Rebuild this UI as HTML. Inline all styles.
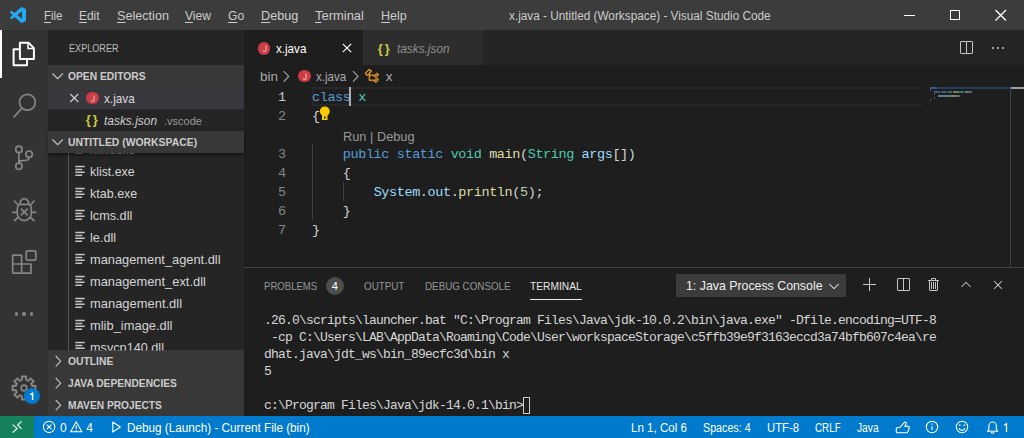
<!DOCTYPE html>
<html>
<head>
<meta charset="utf-8">
<title>x.java - Untitled (Workspace) - Visual Studio Code</title>
<style>
*{box-sizing:border-box;margin:0;padding:0}
html,body{width:1024px;height:438px;overflow:hidden;background:#1e1e1e}
body{font-family:"Liberation Sans",sans-serif;font-size:13px;color:#cccccc;position:relative}
.abs{position:absolute}
.t{position:absolute;white-space:pre;line-height:1;transform-origin:0 0}
.t u{text-decoration:underline;text-underline-offset:1.5px;text-decoration-thickness:1px}
.code{font-family:"Liberation Mono",monospace;font-size:13.5px;letter-spacing:-0.4px;color:#d4d4d4;line-height:19px}
.ln{position:absolute;left:235.6px;width:50px;text-align:right;font-family:"Liberation Mono",monospace;font-size:13.5px;letter-spacing:-0.4px;line-height:19px;white-space:pre}
.term{font-family:"Liberation Mono",monospace;font-size:13px;letter-spacing:-0.8px;color:#d6d6d6;left:264px;line-height:17px}
.k{color:#569cd6}.ty{color:#4ec9b0}.fn{color:#dcdcaa}.v{color:#9cdcfe}.n{color:#b5cea8}
.hdr{position:absolute;left:48px;width:196px;height:22px;background:#383838}
.jv{position:absolute;width:12.6px;height:12.6px;border-radius:50%;background:#cc3e44}
</style>
</head>
<body>
<!-- backgrounds -->
<div class="abs" style="left:0;top:0;width:1024px;height:30px;background:#3c3c3c"></div>
<div class="abs" style="left:0;top:30px;width:48px;height:386px;background:#333333"></div>
<div class="abs" style="left:48px;top:30px;width:196px;height:386px;background:#252526"></div>
<div class="abs" style="left:244px;top:30px;width:780px;height:35px;background:#252526"></div>
<div class="abs" style="left:244px;top:30px;width:119px;height:35px;background:#1e1e1e"></div>
<div class="abs" style="left:363px;top:30px;width:120px;height:35px;background:#2d2d2d"></div>
<div class="abs" style="left:0;top:416px;width:1024px;height:22px;background:#007acc"></div>
<div class="abs" style="left:0;top:416px;width:34px;height:22px;background:#16825d"></div>

<!-- title bar -->
<svg class="abs" style="left:10px;top:7px" width="16" height="16" viewBox="0 0 100 100"><path d="M96.5 10.8 75.9 0.9a6.2 6.2 0 0 0-7.1 1.2L29.4 38 12.2 25a4.2 4.2 0 0 0-5.3.2L1.4 30.3a4.2 4.2 0 0 0 0 6.1L16.3 50 1.4 63.6a4.2 4.2 0 0 0 0 6.1l5.5 5a4.2 4.2 0 0 0 5.3.2l17.2-13 39.4 36a6.2 6.2 0 0 0 7.1 1.2l20.6-9.9A6.2 6.2 0 0 0 100 83.6V16.4a6.2 6.2 0 0 0-3.5-5.6ZM75 72.7 45.1 50 75 27.3Z" fill="#23a9f2"/></svg>
<svg class="abs" style="left:886px;top:0" width="138" height="30" viewBox="0 0 138 30" fill="none" stroke="#ffffff" stroke-width="1">
  <path d="M18 15.5h11"/>
  <rect x="64.5" y="10.5" width="9" height="9"/>
  <path d="M109.5 10l10.5 10.5M120 10l-10.5 10.5" stroke-width="1.3"/>
</svg>

<!-- activity bar -->
<div class="abs" style="left:0;top:30px;width:2px;height:48px;background:#ffffff"></div>
<svg class="abs" style="left:0;top:30px" width="48" height="386" viewBox="0 30 48 386" fill="none" stroke="#858585" stroke-width="1.7">
  <!-- files -->
  <g stroke="#ffffff" stroke-width="2" stroke-linejoin="round">
    <path d="M19.9 42.7h8.6l5.4 5.4v11h-14z"/>
    <path d="M28 43v5.5h5.5" stroke-width="1.5"/>
    <path d="M19.5 49.3h-5.9v16h13.4v-5.8"/>
  </g>
  <!-- search -->
  <circle cx="27.4" cy="102.3" r="7.9"/>
  <path d="M21.9 108.3l-8.4 9"/>
  <!-- scm -->
  <circle cx="18.9" cy="149.4" r="3.2"/><circle cx="18.9" cy="166.3" r="3.2"/><circle cx="29.1" cy="154.2" r="3.2"/>
  <path d="M18.9 152.6v10.5M29.1 157.4c0 3.5-4 3.3-7 3.3c-2 0-3.2 1-3.2 2.4"/>
  <!-- debug -->
  <path d="M19.7 204.3a4.6 5.6 0 0 1 9.2 0"/>
  <path d="M17.3 209.2q0-4.6 3.4-4.8h7.2q3.4.2 3.4 4.8v4a7 7.4 0 0 1-14 0z"/>
  <path d="M12 212.3h5.6M31.4 212.3h5M14 200.5l4 4.5M34.5 200.5l-4 4.5M14 221l4.5-4M34.5 221l-4.5-4M20.9 208.6l6.8 6.8M27.7 208.6l-6.8 6.8"/>
  <!-- extensions -->
  <path d="M12.7 255.1h8.9v8.9h9.4v9.2h-18.3zM21.6 264v9.2M12.7 264h8.9" stroke-linejoin="round"/>
  <rect x="26.2" y="250.8" width="9.6" height="9.3" rx="1.2"/>
  <!-- gear -->
  <path d="M22.02 379.73L21.79 376.51L26.21 376.51L25.98 379.73L28.45 380.76L30.56 378.31L33.69 381.44L31.24 383.55L32.27 386.02L35.49 385.79L35.49 390.21L32.27 389.98L31.24 392.45L33.69 394.56L30.56 397.69L28.45 395.24L25.98 396.27L26.21 399.49L21.79 399.49L22.02 396.27L19.55 395.24L17.44 397.69L14.31 394.56L16.76 392.45L15.73 389.98L12.51 390.21L12.51 385.79L15.73 386.02L16.76 383.55L14.31 381.44L17.44 378.31L19.55 380.76Z" stroke-linejoin="round" stroke-width="1.9"/>
  <circle cx="24" cy="388" r="2.8"/>
</svg>
<div class="abs" style="left:14.8px;top:312.2px;width:3.6px;height:3.6px;border-radius:50%;background:#858585"></div>
<div class="abs" style="left:22.2px;top:312.2px;width:3.6px;height:3.6px;border-radius:50%;background:#858585"></div>
<div class="abs" style="left:29.6px;top:312.2px;width:3.6px;height:3.6px;border-radius:50%;background:#858585"></div>
<div class="abs" style="left:24px;top:388px;width:16px;height:16px;border-radius:50%;background:#007acc"></div>
<svg class="abs" style="left:24px;top:388px" width="16" height="16" viewBox="0 0 16 16" fill="none" stroke="#ffffff" stroke-width="1.5"><path d="M6.3 6.7l2.3-1.3v6.6"/></svg>

<!-- sidebar -->
<div class="hdr" style="top:65px"></div>
<div class="abs" style="left:48px;top:87px;width:196px;height:22px;background:#37373d"></div>
<div class="abs" style="left:68px;top:153px;width:1px;height:197px;background:#555555"></div>
<div class="abs" style="left:75.3px;top:153px;width:6.8px;height:1px;background:#777"></div>
<svg class="abs" style="left:75px;top:165px" width="11" height="12" viewBox="0 0 11 12"><path d="M0.3 1.6h9.4M0.3 4.45h7M0.3 7.3h9.4M0.3 10.15h6.8" stroke="#c5c5c5" stroke-width="1.5" fill="none"/></svg>
<svg class="abs" style="left:75px;top:187px" width="11" height="12" viewBox="0 0 11 12"><path d="M0.3 1.6h9.4M0.3 4.45h7M0.3 7.3h9.4M0.3 10.15h6.8" stroke="#c5c5c5" stroke-width="1.5" fill="none"/></svg>
<svg class="abs" style="left:75px;top:209px" width="11" height="12" viewBox="0 0 11 12"><path d="M0.3 1.6h9.4M0.3 4.45h7M0.3 7.3h9.4M0.3 10.15h6.8" stroke="#c5c5c5" stroke-width="1.5" fill="none"/></svg>
<svg class="abs" style="left:75px;top:231px" width="11" height="12" viewBox="0 0 11 12"><path d="M0.3 1.6h9.4M0.3 4.45h7M0.3 7.3h9.4M0.3 10.15h6.8" stroke="#c5c5c5" stroke-width="1.5" fill="none"/></svg>
<svg class="abs" style="left:75px;top:253px" width="11" height="12" viewBox="0 0 11 12"><path d="M0.3 1.6h9.4M0.3 4.45h7M0.3 7.3h9.4M0.3 10.15h6.8" stroke="#c5c5c5" stroke-width="1.5" fill="none"/></svg>
<svg class="abs" style="left:75px;top:275px" width="11" height="12" viewBox="0 0 11 12"><path d="M0.3 1.6h9.4M0.3 4.45h7M0.3 7.3h9.4M0.3 10.15h6.8" stroke="#c5c5c5" stroke-width="1.5" fill="none"/></svg>
<svg class="abs" style="left:75px;top:297px" width="11" height="12" viewBox="0 0 11 12"><path d="M0.3 1.6h9.4M0.3 4.45h7M0.3 7.3h9.4M0.3 10.15h6.8" stroke="#c5c5c5" stroke-width="1.5" fill="none"/></svg>
<svg class="abs" style="left:75px;top:319px" width="11" height="12" viewBox="0 0 11 12"><path d="M0.3 1.6h9.4M0.3 4.45h7M0.3 7.3h9.4M0.3 10.15h6.8" stroke="#c5c5c5" stroke-width="1.5" fill="none"/></svg>
<svg class="abs" style="left:75px;top:341px" width="11" height="12" viewBox="0 0 11 12"><path d="M0.3 1.6h9.4M0.3 4.45h7M0.3 7.3h9.4M0.3 10.15h6.8" stroke="#c5c5c5" stroke-width="1.5" fill="none"/></svg>
<div class="hdr" style="top:131px;box-shadow:0 2px 3px rgba(0,0,0,.45)"></div>
<div class="hdr" style="top:350px"></div>
<div class="hdr" style="top:372px"></div>
<div class="hdr" style="top:394px"></div>
<svg class="abs" style="left:48px;top:65px" width="196" height="351" viewBox="48 65 196 351" fill="none" stroke="#c5c5c5" stroke-width="1.1">
  <path d="M52.5 73.5l5.2 5.2 5.2-5.2"/>
  <path d="M52.5 139.5l5.2 5.2 5.2-5.2"/>
  <path d="M55.7 356l5 5.2-5 5.2"/>
  <path d="M55.7 378l5 5.2-5 5.2"/>
  <path d="M55.7 400l5 5.2-5 5.2"/>
  <path d="M70.3 94l8 8M78.3 94l-8 8" stroke="#cccccc" stroke-width="1.2"/>
</svg>
<div class="jv" style="left:86px;top:91.7px"></div>
<svg class="abs" style="left:86px;top:91.7px" width="13" height="13" viewBox="0 0 13 13" fill="none" stroke="#eaaeb1" stroke-width="1.15"><path d="M8.1 3.6v4.3a1.3 1.3 0 0 1-2.7 0.4"/></svg>
<div class="t" style="left:85.8px;top:113px;font-size:13px;font-weight:bold;color:#cbcb41;letter-spacing:1.8px">{}</div>

<!-- tabs -->
<div class="jv" style="left:257.7px;top:42.2px"></div>
<svg class="abs" style="left:257.7px;top:42.2px" width="13" height="13" viewBox="0 0 13 13" fill="none" stroke="#eaaeb1" stroke-width="1.15"><path d="M8.1 3.6v4.3a1.3 1.3 0 0 1-2.7 0.4"/></svg>
<svg class="abs" style="left:340px;top:41px" width="14" height="14" viewBox="0 0 14 14" fill="none" stroke="#ffffff" stroke-width="1.2"><path d="M2.8 2.8l8.4 8.4M11.2 2.8l-8.4 8.4"/></svg>
<div class="t" style="left:377.8px;top:41.5px;font-size:13px;font-weight:bold;color:#cbcb41;letter-spacing:1.8px">{}</div>
<svg class="abs" style="left:958px;top:39.7px" width="16" height="16" viewBox="0 0 16 16"><path fill="#c5c5c5" d="M14 1H3L2 2v11l1 1h11l1-1V2l-1-1zM8 13H3V2h5v11zm6 0H9V2h5v11z"/></svg>
<svg class="abs" style="left:990px;top:40px" width="16" height="16" viewBox="0 0 16 16"><path fill="#c5c5c5" d="M4 8a1 1 0 1 1-2 0 1 1 0 0 1 2 0zm5 0a1 1 0 1 1-2 0 1 1 0 0 1 2 0zm5 0a1 1 0 1 1-2 0 1 1 0 0 1 2 0z"/></svg>

<!-- breadcrumbs -->
<svg class="abs" style="left:244px;top:65px" width="200" height="22" viewBox="244 65 200 22" fill="none" stroke="#a9a9a9" stroke-width="1.1">
  <path d="M283.7 71.2l5 5.2-5 5.2"/>
  <path d="M353 71.2l5 5.2-5 5.2"/>
</svg>
<div class="jv" style="left:298.3px;top:69.7px"></div>
<svg class="abs" style="left:298.3px;top:69.7px" width="13" height="13" viewBox="0 0 13 13" fill="none" stroke="#eaaeb1" stroke-width="1.15"><path d="M8.1 3.6v4.3a1.3 1.3 0 0 1-2.7 0.4"/></svg>
<svg class="abs" style="left:363.5px;top:68px" width="16" height="16" viewBox="0 0 16 16"><path fill="#ee9d28" stroke="#ee9d28" stroke-width=".35" d="M11.340 9.710h.71l2.670-2.670v-.71L13.380 5h-.7l-1.820 1.810h-5V5.560l1.860-1.850V3l-2-2H5L1 5v.71l2 2h.71l1.140-1.150v5.790l.5.500H10v.52l1.330 1.340h.71l2.670-2.670v-.71L13.370 10h-.7l-1.860 1.850h-5v-4H10v.48l1.340 1.380zm1.690-3.650l.63.630-2 2-.63-.63 2-2zm0 5l.63.630-2 2-.63-.63 2-2zM3.350 6.650l-1.290-1.290 3.290-3.290 1.300 1.290-3.300 3.290z"/></svg>

<!-- editor -->
<div class="abs" style="left:312px;top:87px;width:610px;height:19px;border:2px solid #282828;border-right:none"></div>
<div class="abs" style="left:312px;top:144px;width:1px;height:76px;background:#404040"></div>
<div class="abs" style="left:343px;top:182px;width:1px;height:19px;background:#404040"></div>
<div class="t code" style="left:312px;top:88px"><span class="k">class</span> <span class="ty">x</span></div>
<div class="t code" style="left:312px;top:107px">{</div>
<div class="t code" style="left:312px;top:145px">    <span class="k">public</span> <span class="k">static</span> <span class="ty">void</span> <span class="fn">main</span>(<span class="ty">String</span> <span class="v">args</span>[])</div>
<div class="t code" style="left:312px;top:164px">    {</div>
<div class="t code" style="left:312px;top:183px">        <span class="v">System</span>.<span class="v">out</span>.<span class="fn">println</span>(<span class="n">5</span>);</div>
<div class="t code" style="left:312px;top:202px">    }</div>
<div class="t code" style="left:312px;top:221px">}</div>
<div class="ln" style="top:88px;color:#c6c6c6">1</div>
<div class="ln" style="top:107px;color:#858585">2</div>
<div class="ln" style="top:145px;color:#858585">3</div>
<div class="ln" style="top:164px;color:#858585">4</div>
<div class="ln" style="top:183px;color:#858585">5</div>
<div class="ln" style="top:202px;color:#858585">6</div>
<div class="ln" style="top:221px;color:#858585">7</div>
<div class="abs" style="left:349px;top:87px;width:2px;height:19px;background:#aeafad"></div>
<!-- lightbulb -->
<svg class="abs" style="left:319px;top:106px" width="12" height="15" viewBox="0 0 12 15"><circle cx="5.8" cy="5.3" r="4.9" fill="#ffcc00"/><rect x="3" y="8.5" width="5.5" height="5.5" fill="#ffcc00"/><rect x="5" y="10.5" width="1.5" height="2.2" fill="#1e1e1e"/></svg>
<!-- minimap -->
<div class="abs" style="left:930px;top:87px;width:80px;height:2px;background:#233e5d"></div>
<div class="abs" style="left:930px;top:87px;width:7px;height:2px;background:#2e5f93"></div>
<div class="abs" style="left:1010px;top:87px;width:1px;height:180px;background:#424242"></div>
<div class="abs" style="left:1011px;top:87px;width:13px;height:2px;background:#a0a0a0"></div>
<div class="abs" style="left:930px;top:89px;width:1px;height:2px;background:#5a5a5a"></div>
<div class="abs" style="left:934px;top:91px;width:38px;height:2px;opacity:.5;background:linear-gradient(90deg,#569cd6 0 15%,#1e1e1e 15% 18%,#569cd6 18% 33%,#1e1e1e 33% 36%,#4ec9b0 36% 47%,#1e1e1e 47% 50%,#dcdcaa 50% 62%,#4ec9b0 62% 79%,#1e1e1e 79% 81%,#9cdcfe 81% 90%,#aaaaaa 90% 100%)"></div>
<div class="abs" style="left:934px;top:93px;width:1px;height:2px;background:#5a5a5a"></div>
<div class="abs" style="left:938px;top:95px;width:22px;height:2px;opacity:.5;background:linear-gradient(90deg,#9cdcfe 0 50%,#dcdcaa 50% 85%,#aaaaaa 85% 100%)"></div>
<div class="abs" style="left:934px;top:97px;width:1px;height:2px;background:#5a5a5a"></div>
<div class="abs" style="left:930px;top:99px;width:1px;height:2px;background:#5a5a5a"></div>

<!-- panel -->
<div class="abs" style="left:244px;top:267px;width:780px;height:1px;background:#414141"></div>
<div class="abs" style="left:325.6px;top:277px;width:18px;height:18px;border-radius:9px;background:#4d4d4d"></div>
<div class="abs" style="left:530px;top:298.5px;width:52px;height:1px;background:#e7e7e7"></div>
<div class="abs" style="left:676px;top:274px;width:170px;height:23px;background:#3c3c3c"></div>
<svg class="abs" style="left:826px;top:277.5px" width="16" height="16" viewBox="0 0 16 16"><path fill="#f0f0f0" d="M7.976 10.072l4.357-4.357.62.618L8.284 11h-.618L3 6.333l.619-.618 4.357 4.357z"/></svg>
<svg class="abs" style="left:861.7px;top:277px" width="16" height="16" viewBox="0 0 16 16"><path fill="#c5c5c5" d="M14 7v1H8v6H7V8H1V7h6V1h1v6h6z"/></svg>
<svg class="abs" style="left:894.5px;top:277px" width="16" height="16" viewBox="0 0 16 16"><path fill="#c5c5c5" d="M14 1H3L2 2v11l1 1h11l1-1V2l-1-1zM8 13H3V2h5v11zm6 0H9V2h5v11z"/></svg>
<svg class="abs" style="left:926px;top:277px" width="16" height="16" viewBox="0 0 16 16"><path fill="#c5c5c5" fill-rule="evenodd" d="M10 3h3v1h-1v9l-1 1H4l-1-1V4H2V3h3V2a1 1 0 0 1 1-1h3a1 1 0 0 1 1 1v1zM9 2H6v1h3V2zM4 13h7V4H4v9zm2-8H5v7h1V5zm1 0h1v7H7V5zm2 0h1v7H9V5z"/></svg>
<svg class="abs" style="left:957.7px;top:277px" width="16" height="16" viewBox="0 0 16 16"><path fill="#c5c5c5" d="M8.024 5.928l-4.357 4.357-.62-.618L7.716 5h.618L13 9.667l-.619.618-4.357-4.357z"/></svg>
<svg class="abs" style="left:990px;top:277px" width="16" height="16" viewBox="0 0 16 16"><path fill="#c5c5c5" d="M8 8.707l3.646 3.647.708-.707L8.707 8l3.647-3.646-.707-.708L8 7.293 4.354 3.646l-.707.708L7.293 8l-3.646 3.646.707.708L8 8.707z"/></svg>
<div class="t term" style="top:312px">.26.0\scripts\launcher.bat &quot;C:\Program Files\Java\jdk-10.0.2\bin\java.exe&quot; -Dfile.encoding=UTF-8</div>
<div class="t term" style="top:329px"> -cp C:\Users\LAB\AppData\Roaming\Code\User\workspaceStorage\c5ffb39e9f3163eccd3a74bfb607c4ea\re</div>
<div class="t term" style="top:346px">dhat.java\jdt_ws\bin_89ecfc3d\bin x</div>
<div class="t term" style="top:363px">5</div>
<div class="t term" style="top:397px">c:\Program Files\Java\jdk-14.0.1\bin&gt;</div>
<div class="abs" style="left:523px;top:397px;width:7px;height:17px;border:1px solid #cccccc"></div>

<!-- status bar -->
<svg class="abs" style="left:0;top:416px" width="1024" height="22" viewBox="0 416 1024 22" fill="none" stroke="#ffffff" stroke-width="1.1">
  <path d="M12.6 424.6l4.5 3.8-4.5 4.2M21.5 421.5l-3.8 3.6 3.8 3.8"/>
  <circle cx="49.1" cy="426.9" r="5.7"/><path d="M46.8 424.6l4.6 4.6M51.4 424.6l-4.6 4.6"/>
  <path d="M76.2 421.8l5.6 10h-11.2zM76.2 425.5v3.5M76.2 430v1.2" stroke-linejoin="round"/>
  <path d="M112.8 422l7.5 5-7.5 5z" stroke-linejoin="round"/>
  <!-- thumbsup -->
  <path d="M896.3 428l3.8-.8 4.6-5c1.3-.3 1.9.6 1.5 1.6l-1.3 2.6h3.2c1 0 1.4.8 1.1 1.6l-1.3 3.7c-.3.7-.8 1-1.5 1h-8.7c-.8 0-1.4-.5-1.4-1.3z" stroke-linejoin="round"/>
  <!-- info -->
  <circle cx="932" cy="427" r="5.7"/><path d="M932 426v4M932 423.5v1.2"/>
  <!-- smiley -->
  <circle cx="962" cy="427" r="5.7"/><path d="M959 428.3a3.2 3.2 0 0 0 6 0"/><path d="M959.8 424.5v1.6M964.2 424.5v1.6" stroke-width="1.3"/>
  <!-- bell -->
  <path d="M987.4 431.3h10.4l-1.5-2v-3.6a3.7 3.7 0 0 0-7.4 0v3.6zM991.3 432a1.3 1.3 0 0 0 2.6 0" stroke-linejoin="round"/>
  <path d="M1004.2 425.3l2.3-1.6v8.3" stroke-width="1.3"/>
</svg>

<div class="t" style="left:43.60px;top:9.00px;color:#cccccc;font-family:'Liberation Sans',sans-serif;font-size:13.5px;letter-spacing:0.000px;transform:scaleX(0.8500);"><u>F</u>ile</div>
<div class="t" style="left:78.80px;top:9.00px;color:#cccccc;font-family:'Liberation Sans',sans-serif;font-size:13.5px;letter-spacing:0.000px;transform:scaleX(0.8792);"><u>E</u>dit</div>
<div class="t" style="left:116.60px;top:9.00px;color:#cccccc;font-family:'Liberation Sans',sans-serif;font-size:13.5px;letter-spacing:0.000px;transform:scaleX(0.9345);"><u>S</u>election</div>
<div class="t" style="left:184.70px;top:9.00px;color:#cccccc;font-family:'Liberation Sans',sans-serif;font-size:13.5px;letter-spacing:0.000px;transform:scaleX(0.8967);"><u>V</u>iew</div>
<div class="t" style="left:228.30px;top:9.00px;color:#cccccc;font-family:'Liberation Sans',sans-serif;font-size:13.5px;letter-spacing:0.000px;transform:scaleX(0.8944);"><u>G</u>o</div>
<div class="t" style="left:260.90px;top:9.00px;color:#cccccc;font-family:'Liberation Sans',sans-serif;font-size:13.5px;letter-spacing:0.000px;transform:scaleX(0.9400);"><u>D</u>ebug</div>
<div class="t" style="left:315.30px;top:9.00px;color:#cccccc;font-family:'Liberation Sans',sans-serif;font-size:13.5px;letter-spacing:0.000px;transform:scaleX(0.9588);"><u>T</u>erminal</div>
<div class="t" style="left:380.80px;top:9.00px;color:#cccccc;font-family:'Liberation Sans',sans-serif;font-size:13.5px;letter-spacing:0.000px;transform:scaleX(0.9214);"><u>H</u>elp</div>
<div class="t" style="left:509.00px;top:10.00px;color:#cccccc;font-family:'Liberation Sans',sans-serif;font-size:12px;letter-spacing:0.000px;transform:scaleX(0.9824);">x.java - Untitled (Workspace) - Visual Studio Code</div>
<div class="t" style="left:68.50px;top:43.00px;color:#bbbbbb;font-family:'Liberation Sans',sans-serif;font-size:11px;letter-spacing:0.000px;transform:scaleX(0.8267);">EXPLORER</div>
<div class="t" style="left:68.10px;top:71.00px;color:#cccccc;font-family:'Liberation Sans',sans-serif;font-size:11px;font-weight:bold;letter-spacing:0.000px;transform:scaleX(0.9349);">OPEN EDITORS</div>
<div class="t" style="left:103.90px;top:92.00px;color:#dddddd;font-family:'Liberation Sans',sans-serif;font-size:13.5px;letter-spacing:0.000px;transform:scaleX(0.8694);">x.java</div>
<div class="t" style="left:103.90px;top:114.00px;color:#cccccc;font-family:'Liberation Sans',sans-serif;font-size:13.5px;font-style:italic;letter-spacing:0.000px;transform:scaleX(0.8833);">tasks.json</div>
<div class="t" style="left:163.80px;top:115.00px;color:#999999;font-family:'Liberation Sans',sans-serif;font-size:11.7px;letter-spacing:0.000px;transform:scaleX(0.9400);">.vscode</div>
<div class="t" style="left:68.10px;top:137.00px;color:#cccccc;font-family:'Liberation Sans',sans-serif;font-size:11px;font-weight:bold;letter-spacing:0.000px;transform:scaleX(0.9445);">UNTITLED (WORKSPACE)</div>
<div class="t" style="left:90.20px;top:165.00px;color:#d4d4d4;font-family:'Liberation Sans',sans-serif;font-size:13.5px;letter-spacing:0.000px;transform:scaleX(0.9143);">klist.exe</div>
<div class="t" style="left:90.20px;top:187.00px;color:#d4d4d4;font-family:'Liberation Sans',sans-serif;font-size:13.5px;letter-spacing:0.000px;transform:scaleX(0.9275);">ktab.exe</div>
<div class="t" style="left:90.20px;top:209.00px;color:#d4d4d4;font-family:'Liberation Sans',sans-serif;font-size:13.5px;letter-spacing:0.000px;transform:scaleX(0.9400);">lcms.dll</div>
<div class="t" style="left:90.20px;top:231.00px;color:#d4d4d4;font-family:'Liberation Sans',sans-serif;font-size:13.5px;letter-spacing:0.000px;transform:scaleX(0.9393);">le.dll</div>
<div class="t" style="left:90.20px;top:253.00px;color:#d4d4d4;font-family:'Liberation Sans',sans-serif;font-size:13.5px;letter-spacing:0.000px;transform:scaleX(0.9504);">management_agent.dll</div>
<div class="t" style="left:90.20px;top:275.00px;color:#d4d4d4;font-family:'Liberation Sans',sans-serif;font-size:13.5px;letter-spacing:0.000px;transform:scaleX(0.9529);">management_ext.dll</div>
<div class="t" style="left:90.20px;top:297.00px;color:#d4d4d4;font-family:'Liberation Sans',sans-serif;font-size:13.5px;letter-spacing:0.000px;transform:scaleX(0.9583);">management.dll</div>
<div class="t" style="left:90.20px;top:319.00px;color:#d4d4d4;font-family:'Liberation Sans',sans-serif;font-size:13.5px;letter-spacing:0.000px;transform:scaleX(0.9558);">mlib_image.dll</div>
<div class="t" style="left:90.20px;top:341.00px;color:#d4d4d4;font-family:'Liberation Sans',sans-serif;font-size:13.5px;letter-spacing:0.000px;transform:scaleX(0.9392);clip-path:inset(0 0 4px 0);">msvcp140.dll</div>
<div class="t" style="left:90.20px;top:143.00px;color:#8a8a8a;font-family:'Liberation Sans',sans-serif;font-size:13.5px;letter-spacing:0.000px;transform:scaleX(0.8547);clip-path:inset(10.3px 0 0 0);">klinit.exe</div>
<div class="t" style="left:68.30px;top:356.00px;color:#cccccc;font-family:'Liberation Sans',sans-serif;font-size:11px;font-weight:bold;letter-spacing:0.000px;transform:scaleX(0.9388);">OUTLINE</div>
<div class="t" style="left:68.30px;top:378.00px;color:#cccccc;font-family:'Liberation Sans',sans-serif;font-size:11px;font-weight:bold;letter-spacing:0.000px;transform:scaleX(0.9299);">JAVA DEPENDENCIES</div>
<div class="t" style="left:68.30px;top:400.00px;color:#cccccc;font-family:'Liberation Sans',sans-serif;font-size:11px;font-weight:bold;letter-spacing:0.000px;transform:scaleX(0.9265);">MAVEN PROJECTS</div>
<div class="t" style="left:276.00px;top:42.00px;color:#ffffff;font-family:'Liberation Sans',sans-serif;font-size:13.5px;letter-spacing:0.000px;transform:scaleX(0.8611);">x.java</div>
<div class="t" style="left:396.50px;top:42.00px;color:#8e8e8e;font-family:'Liberation Sans',sans-serif;font-size:13.5px;font-style:italic;letter-spacing:0.000px;transform:scaleX(0.8750);">tasks.json</div>
<div class="t" style="left:260.00px;top:70.00px;color:#a9a9a9;font-family:'Liberation Sans',sans-serif;font-size:13.5px;letter-spacing:0.000px;">bin</div>
<div class="t" style="left:316.30px;top:70.00px;color:#a9a9a9;font-family:'Liberation Sans',sans-serif;font-size:13.5px;letter-spacing:0.000px;transform:scaleX(0.8583);">x.java</div>
<div class="t" style="left:385.70px;top:70.00px;color:#a9a9a9;font-family:'Liberation Sans',sans-serif;font-size:13.5px;letter-spacing:0.000px;">x</div>
<div class="t" style="left:342.90px;top:131.00px;color:#999999;font-family:'Liberation Sans',sans-serif;font-size:12.6px;letter-spacing:0.000px;transform:scaleX(1.0157);">Run | Debug</div>
<div class="t" style="left:264.30px;top:281.00px;color:#969696;font-family:'Liberation Sans',sans-serif;font-size:11px;letter-spacing:0.000px;transform:scaleX(0.8705);">PROBLEMS</div>
<div class="t" style="left:331.80px;top:281.00px;color:#ffffff;font-family:'Liberation Sans',sans-serif;font-size:11px;letter-spacing:0.000px;">4</div>
<div class="t" style="left:364.00px;top:281.00px;color:#969696;font-family:'Liberation Sans',sans-serif;font-size:11px;letter-spacing:0.000px;transform:scaleX(0.8913);">OUTPUT</div>
<div class="t" style="left:425.00px;top:281.00px;color:#969696;font-family:'Liberation Sans',sans-serif;font-size:11px;letter-spacing:0.000px;transform:scaleX(0.8917);">DEBUG CONSOLE</div>
<div class="t" style="left:530.00px;top:281.00px;color:#e7e7e7;font-family:'Liberation Sans',sans-serif;font-size:11px;letter-spacing:0.000px;transform:scaleX(0.9286);">TERMINAL</div>
<div class="t" style="left:685.80px;top:279.00px;color:#f0f0f0;font-family:'Liberation Sans',sans-serif;font-size:13.5px;letter-spacing:0.000px;transform:scaleX(0.9141);">1: Java Process Console</div>
<div class="t" style="left:60.00px;top:422.00px;color:#ffffff;font-family:'Liberation Sans',sans-serif;font-size:12px;letter-spacing:0.000px;">0</div>
<div class="t" style="left:86.30px;top:422.00px;color:#ffffff;font-family:'Liberation Sans',sans-serif;font-size:12px;letter-spacing:0.000px;">4</div>
<div class="t" style="left:126.80px;top:422.00px;color:#ffffff;font-family:'Liberation Sans',sans-serif;font-size:12px;letter-spacing:0.000px;transform:scaleX(0.9781);">Debug (Launch) - Current File (bin)</div>
<div class="t" style="left:631.00px;top:422.00px;color:#ffffff;font-family:'Liberation Sans',sans-serif;font-size:12px;letter-spacing:0.000px;transform:scaleX(0.9621);">Ln 1, Col 6</div>
<div class="t" style="left:702.80px;top:422.00px;color:#ffffff;font-family:'Liberation Sans',sans-serif;font-size:12px;letter-spacing:0.000px;transform:scaleX(0.8926);">Spaces: 4</div>
<div class="t" style="left:767.00px;top:422.00px;color:#ffffff;font-family:'Liberation Sans',sans-serif;font-size:12px;letter-spacing:0.000px;transform:scaleX(0.9412);">UTF-8</div>
<div class="t" style="left:814.80px;top:422.00px;color:#ffffff;font-family:'Liberation Sans',sans-serif;font-size:12px;letter-spacing:0.000px;transform:scaleX(0.8188);">CRLF</div>
<div class="t" style="left:856.80px;top:422.00px;color:#ffffff;font-family:'Liberation Sans',sans-serif;font-size:12px;letter-spacing:0.000px;transform:scaleX(0.8538);">Java</div>
</body>
</html>
